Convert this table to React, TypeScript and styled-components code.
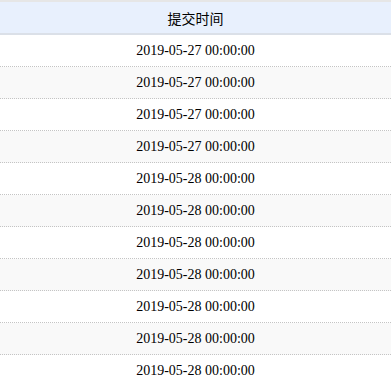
import React from 'react'
import styled, { createGlobalStyle } from 'styled-components'

const GlobalStyle = createGlobalStyle`
  html, body {
    margin: 0;
    padding: 0;
    background: #fff;
  }
`

const Table = styled.table`
  width: 391px;
  border-collapse: collapse;
  border-top: 2px solid #e6e6e6;
  font-family: 'Liberation Serif', 'Noto Sans CJK SC', serif;
  color: #000;
`

const HeadCell = styled.th`
  height: 31px;
  padding: 0;
  background-color: #e8f0fd;
  border-bottom: 2px solid #dbe0e8;
  font-family: 'Noto Sans CJK SC', sans-serif;
  font-size: 14px;
  font-weight: 400;
  text-align: center;
`

const Row = styled.tr<{ $striped: boolean }>`
  background-color: ${({ $striped }) => ($striped ? '#f9f9f9' : '#fff')};
`

const Cell = styled.td`
  height: 31px;
  padding: 0;
  font-size: 14px;
  text-align: center;
  border-bottom: 1px dotted #c4c4c4;
`

const DATES = [
  '2019-05-27 00:00:00',
  '2019-05-27 00:00:00',
  '2019-05-27 00:00:00',
  '2019-05-27 00:00:00',
  '2019-05-28 00:00:00',
  '2019-05-28 00:00:00',
  '2019-05-28 00:00:00',
  '2019-05-28 00:00:00',
  '2019-05-28 00:00:00',
  '2019-05-28 00:00:00',
  '2019-05-28 00:00:00',
]

const App = () => (
  <>
    <GlobalStyle />
    <Table>
      <thead>
        <tr>
          <HeadCell>提交时间</HeadCell>
        </tr>
      </thead>
      <tbody>
        {DATES.map((d, i) => (
          <Row key={i} $striped={i % 2 === 1}>
            <Cell>{d}</Cell>
          </Row>
        ))}
      </tbody>
    </Table>
  </>
)

export default App
